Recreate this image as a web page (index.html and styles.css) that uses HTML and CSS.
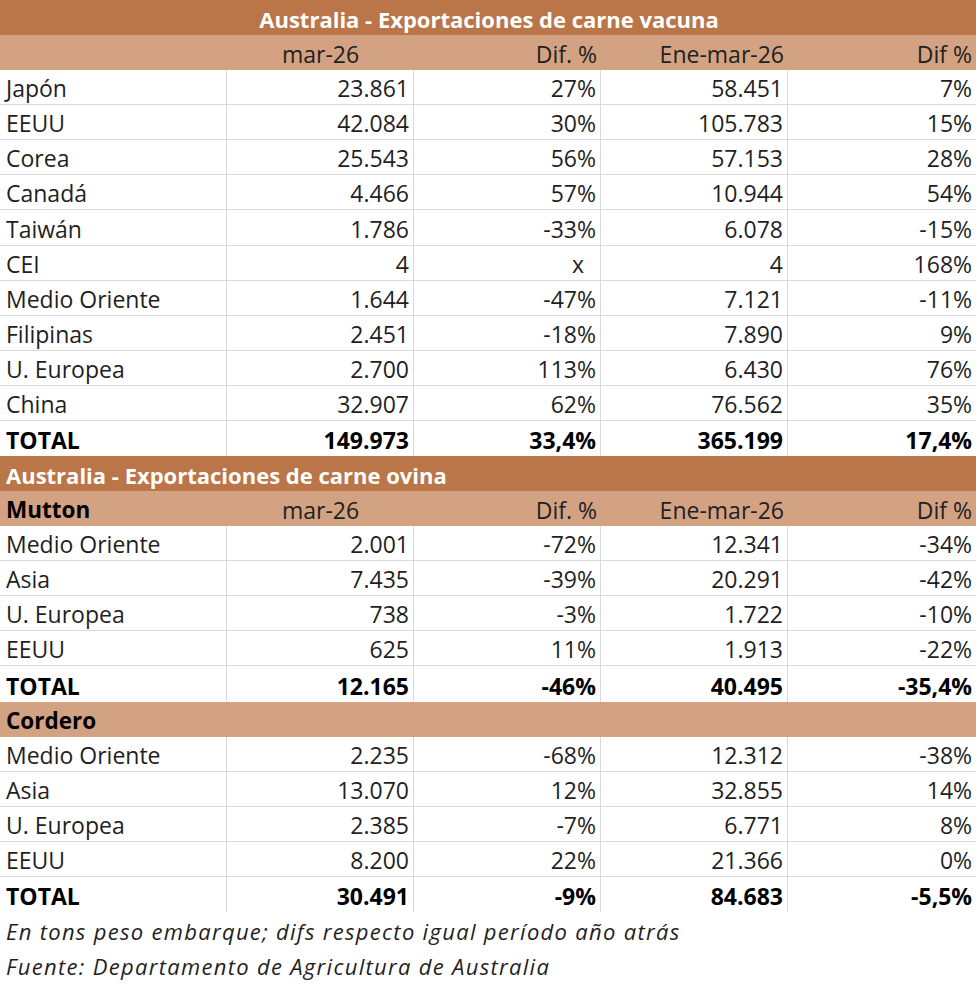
FILE: index.html
```html
<!DOCTYPE html>
<html lang="es">
<head>
<meta charset="utf-8">
<title>Australia - Exportaciones</title>
<link rel="stylesheet" href="styles.css">
</head>
<body>
<table class="sheet">
  <colgroup>
    <col class="c1"><col class="c2"><col class="c3"><col class="c4"><col class="c5">
  </colgroup>
  <tbody>
    <tr class="title"><td colspan="5" class="center">Australia - Exportaciones de carne vacuna</td></tr>
    <tr class="head"><td></td><td class="center">mar-26</td><td>Dif. %</td><td>Ene-mar-26</td><td>Dif %</td></tr>
    <tr class="data"><td>Japón</td><td>23.861</td><td>27%</td><td>58.451</td><td>7%</td></tr>
    <tr class="data"><td>EEUU</td><td>42.084</td><td>30%</td><td>105.783</td><td>15%</td></tr>
    <tr class="data"><td>Corea</td><td>25.543</td><td>56%</td><td>57.153</td><td>28%</td></tr>
    <tr class="data"><td>Canadá</td><td>4.466</td><td>57%</td><td>10.944</td><td>54%</td></tr>
    <tr class="data"><td>Taiwán</td><td>1.786</td><td>-33%</td><td>6.078</td><td>-15%</td></tr>
    <tr class="data"><td>CEI</td><td>4</td><td class="na">x</td><td>4</td><td>168%</td></tr>
    <tr class="data"><td>Medio Oriente</td><td>1.644</td><td>-47%</td><td>7.121</td><td>-11%</td></tr>
    <tr class="data"><td>Filipinas</td><td>2.451</td><td>-18%</td><td>7.890</td><td>9%</td></tr>
    <tr class="data"><td>U. Europea</td><td>2.700</td><td>113%</td><td>6.430</td><td>76%</td></tr>
    <tr class="data"><td>China</td><td>32.907</td><td>62%</td><td>76.562</td><td>35%</td></tr>
    <tr class="data total"><td>TOTAL</td><td>149.973</td><td>33,4%</td><td>365.199</td><td>17,4%</td></tr>

    <tr class="title"><td colspan="5">Australia - Exportaciones de carne ovina</td></tr>
    <tr class="head"><td class="label">Mutton</td><td class="center">mar-26</td><td>Dif. %</td><td>Ene-mar-26</td><td>Dif %</td></tr>
    <tr class="data"><td>Medio Oriente</td><td>2.001</td><td>-72%</td><td>12.341</td><td>-34%</td></tr>
    <tr class="data"><td>Asia</td><td>7.435</td><td>-39%</td><td>20.291</td><td>-42%</td></tr>
    <tr class="data"><td>U. Europea</td><td>738</td><td>-3%</td><td>1.722</td><td>-10%</td></tr>
    <tr class="data"><td>EEUU</td><td>625</td><td>11%</td><td>1.913</td><td>-22%</td></tr>
    <tr class="data total"><td>TOTAL</td><td>12.165</td><td>-46%</td><td>40.495</td><td>-35,4%</td></tr>
    <tr class="head"><td class="label" colspan="5">Cordero</td></tr>
    <tr class="data"><td>Medio Oriente</td><td>2.235</td><td>-68%</td><td>12.312</td><td>-38%</td></tr>
    <tr class="data"><td>Asia</td><td>13.070</td><td>12%</td><td>32.855</td><td>14%</td></tr>
    <tr class="data"><td>U. Europea</td><td>2.385</td><td>-7%</td><td>6.771</td><td>8%</td></tr>
    <tr class="data"><td>EEUU</td><td>8.200</td><td>22%</td><td>21.366</td><td>0%</td></tr>
    <tr class="data total"><td>TOTAL</td><td>30.491</td><td>-9%</td><td>84.683</td><td>-5,5%</td></tr>

    <tr class="note"><td colspan="5">En tons peso embarque; difs respecto igual período año atrás</td></tr>
    <tr class="note"><td colspan="5">Fuente: Departamento de Agricultura de Australia</td></tr>
  </tbody>
</table>
</body>
</html>
```
FILE: styles.css
```css
html, body {
  margin: 0;
  padding: 0;
  background: #ffffff;
}

.sheet {
  width: 976px;
  table-layout: fixed;
  border-collapse: separate;
  border-spacing: 0;
  font-family: "Open Sans", Lato, sans-serif;
  font-size: 23px;
  color: #1f1f1f;
}

.c1 { width: 227px; }
.c2 { width: 187px; }
.c3 { width: 187px; }
.c4 { width: 187px; }
.c5 { width: 188px; }

.sheet tr {
  height: 35.08px;
}

.sheet td {
  padding: 0 4px 2px 4px;
  line-height: 28px;
  vertical-align: bottom;
  text-align: right;
  white-space: nowrap;
  overflow: visible;
}

.sheet td:first-child {
  text-align: left;
  padding-left: 6px;
}

.sheet td.center {
  text-align: center;
}

.title td {
  background: #ba7548;
  color: #ffffff;
  font-weight: 700;
  font-size: 22px;
}

.head td {
  background: #d3a282;
}

.head td.label {
  font-weight: 700;
  font-size: 22.5px;
  color: #000000;
}

.data td {
  border-bottom: 1px solid #dadada;
  border-right: 1px solid #dadada;
}

.data td:last-child {
  border-right: none;
}

.data.total td {
  border-bottom: none;
  font-weight: 700;
  font-size: 23px;
  color: #000000;
}

.data td.na {
  padding-right: 16px;
}

.note {
  height: 36.5px;
}

.note td {
  font-style: italic;
  font-size: 22px;
  letter-spacing: 1.3px;
  text-align: left;
  padding-bottom: 2px;
}
```
